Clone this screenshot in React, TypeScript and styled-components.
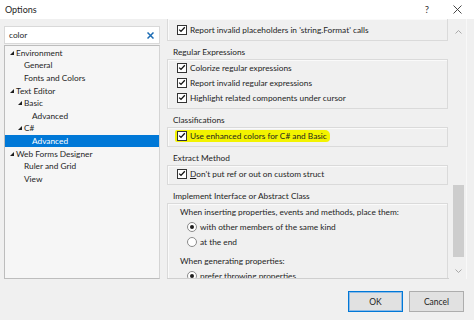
import { createGlobalStyle } from 'styled-components';
import styled from 'styled-components';

type TreeItem = { label: string; level: number; expandable?: boolean; selected?: boolean };

const treeItems: TreeItem[] = [
  { label: 'Environment', level: 0, expandable: true },
  { label: 'General', level: 1 },
  { label: 'Fonts and Colors', level: 1 },
  { label: 'Text Editor', level: 0, expandable: true },
  { label: 'Basic', level: 1, expandable: true },
  { label: 'Advanced', level: 2 },
  { label: 'C#', level: 1, expandable: true },
  { label: 'Advanced', level: 2, selected: true },
  { label: 'Web Forms Designer', level: 0, expandable: true },
  { label: 'Ruler and Grid', level: 1 },
  { label: 'View', level: 1 },
];

const FONT = "'Lato', 'Open Sans', sans-serif";
const TEXT_SIZE = '8.3px';

function CheckBox({ marked }: { marked?: boolean }) {
  return (
    <StyledCheck $marked={marked}>
      <svg width="8" height="7" viewBox="0 0 8 7">
        <path d="M1.2 3.6 L3 5.4 L6.8 1.2" fill="none" stroke="#111" strokeWidth="1.3" />
      </svg>
    </StyledCheck>
  );
}

function Radio({ on }: { on?: boolean }) {
  return <StyledRadio $on={on} />;
}

function App() {
  return (
    <>
      <GlobalStyle />
      <StyledWindow>
        <StyledTitleBar>
          <StyledTitle>Options</StyledTitle>
          <StyledCaptionButton>?</StyledCaptionButton>
          <StyledCaptionButton>
            <svg width="9" height="9" viewBox="0 0 9 9">
              <path d="M0.5 0.5 L8.5 8.5 M8.5 0.5 L0.5 8.5" stroke="#333" strokeWidth="0.9" />
            </svg>
          </StyledCaptionButton>
        </StyledTitleBar>

        <StyledBody>
          <StyledLeft>
            <StyledSearch>
              <span>color</span>
              <StyledClear>
                <svg width="7" height="7" viewBox="0 0 7 7">
                  <path d="M0.5 0.5 L6.5 6.5 M6.5 0.5 L0.5 6.5" stroke="#1c6cb4" strokeWidth="1.5" />
                </svg>
              </StyledClear>
            </StyledSearch>
            <StyledTree>
              {treeItems.map((item, index) => (
                <StyledTreeRow key={index} $level={item.level} $selected={item.selected}>
                  <StyledArrow>
                    {item.expandable && (
                      <svg width="4" height="4" viewBox="0 0 4 4">
                        <polygon points="4,0 4,4 0,4" fill={item.selected ? '#fff' : '#1e1e1e'} />
                      </svg>
                    )}
                  </StyledArrow>
                  {item.label}
                </StyledTreeRow>
              ))}
            </StyledTree>
          </StyledLeft>

          <StyledRight>
            <StyledViewport>
              <StyledGroup $cut>
                <StyledRow>
                  <CheckBox marked />
                  Report invalid placeholders in 'string.Format' calls
                </StyledRow>
              </StyledGroup>

              <StyledHeader>Regular Expressions</StyledHeader>
              <StyledGroup>
                <StyledRow>
                  <CheckBox marked />
                  Colorize regular expressions
                </StyledRow>
                <StyledRow>
                  <CheckBox marked />
                  Report invalid regular expressions
                </StyledRow>
                <StyledRow>
                  <CheckBox marked />
                  Highlight related components under cursor
                </StyledRow>
              </StyledGroup>

              <StyledHeader>Classifications</StyledHeader>
              <StyledGroup>
                <StyledRow>
                  <StyledMarker>
                    <CheckBox marked />
                    Use enhanced colors for C# and Basic
                  </StyledMarker>
                </StyledRow>
              </StyledGroup>

              <StyledHeader>Extract Method</StyledHeader>
              <StyledGroup>
                <StyledRow>
                  <CheckBox marked />
                  <span>
                    <u>D</u>on't put ref or out on custom struct
                  </span>
                </StyledRow>
              </StyledGroup>

              <StyledHeader>Implement Interface or Abstract Class</StyledHeader>
              <StyledGroup>
                <StyledLabel>When inserting properties, events and methods, place them:</StyledLabel>
                <StyledRow $indent>
                  <Radio on />
                  with other members of the same kind
                </StyledRow>
                <StyledRow $indent>
                  <Radio />
                  at the end
                </StyledRow>
                <StyledLabel $gap>When generating properties:</StyledLabel>
                <StyledRow $indent>
                  <Radio on />
                  prefer throwing properties
                </StyledRow>
              </StyledGroup>
            </StyledViewport>

            <StyledScrollbar>
              <StyledScrollArrow>
                <svg width="7" height="4" viewBox="0 0 7 4">
                  <path d="M0.5 3.5 L3.5 0.5 L6.5 3.5" fill="none" stroke="#a0a0a0" strokeWidth="0.9" />
                </svg>
              </StyledScrollArrow>
              <StyledTrack>
                <StyledThumb />
              </StyledTrack>
              <StyledScrollArrow>
                <svg width="7" height="4" viewBox="0 0 7 4">
                  <path d="M0.5 0.5 L3.5 3.5 L6.5 0.5" fill="none" stroke="#a0a0a0" strokeWidth="0.9" />
                </svg>
              </StyledScrollArrow>
            </StyledScrollbar>
          </StyledRight>
        </StyledBody>

        <StyledFooter>
          <StyledButton $primary>OK</StyledButton>
          <StyledButton>Cancel</StyledButton>
        </StyledFooter>
      </StyledWindow>
    </>
  );
}

export default App;

const GlobalStyle = createGlobalStyle`
  html, body {
    margin: 0;
    padding: 0;
    background: #f0f0f0;
  }
  body {
    font-family: ${FONT};
    font-size: ${TEXT_SIZE};
    color: #1e1e1e;
  }
`;

const StyledWindow = styled.div`
  width: 474px;
  height: 320px;
  display: flex;
  flex-direction: column;
  background: #f0f0f0;
  overflow: hidden;
`;

const StyledTitleBar = styled.div`
  height: 19px;
  flex: none;
  display: flex;
  align-items: center;
  background: #ffffff;
  padding-left: 5px;
  padding-right: 2px;
`;

const StyledTitle = styled.span`
  flex: 1;
  font-size: 9px;
  color: #1e1e1e;
`;

const StyledCaptionButton = styled.span`
  width: 30px;
  display: flex;
  justify-content: center;
  align-items: center;
  font-size: 9.5px;
  color: #333;
`;

const StyledBody = styled.div`
  height: 260px;
  flex: none;
  display: flex;
  padding-left: 4px;
`;

const StyledLeft = styled.div`
  width: 156px;
  display: flex;
  flex-direction: column;
  padding-top: 7px;
  gap: 1px;
`;

const StyledSearch = styled.div`
  height: 18px;
  flex: none;
  box-sizing: border-box;
  display: flex;
  align-items: center;
  justify-content: space-between;
  padding: 0 5px 0 4px;
  background: #ffffff;
  border: 1px solid #d9d9d9;
  font-size: ${TEXT_SIZE};
`;

const StyledClear = styled.span`
  display: flex;
  align-items: center;
`;

const StyledTree = styled.div`
  flex: 1;
  box-sizing: border-box;
  background: #f6f6f6;
  border: 1px solid #bdbdbd;
  border-right-color: #d4d4d4;
  padding-top: 0.5px;
`;

const StyledTreeRow = styled.div<{ $level: number; $selected?: boolean }>`
  height: 12.6px;
  display: flex;
  align-items: center;
  padding-left: ${(p) => p.$level * 8}px;
  background: ${(p) => (p.$selected ? '#0078d7' : 'transparent')};
  color: ${(p) => (p.$selected ? '#ffffff' : '#1e1e1e')};
  font-size: ${TEXT_SIZE};
  white-space: nowrap;
`;

const StyledArrow = styled.span`
  width: 11px;
  flex: none;
  display: flex;
  align-items: center;
  padding-left: 5px;
  box-sizing: border-box;
`;

const StyledRight = styled.div`
  width: 300px;
  margin-left: 7px;
  display: flex;
`;

const StyledViewport = styled.div`
  width: 282px;
  overflow: hidden;
  border-bottom: 1px solid #cfcfcf;
  box-sizing: border-box;
  padding-right: 1px;
`;

const StyledGroup = styled.div<{ $cut?: boolean }>`
  border: 1px solid #dadada;
  border-top-width: ${(p) => (p.$cut ? 0 : 1)}px;
  box-shadow: inset 1px 1px 0 #fafafa;
  padding: ${(p) => (p.$cut ? 3 : 0)}px 0 3px 9px;
`;

const StyledHeader = styled.div`
  height: 14px;
  margin-top: 4px;
  display: flex;
  align-items: center;
  padding-left: 6px;
  font-size: ${TEXT_SIZE};
`;

const StyledRow = styled.div<{ $indent?: boolean }>`
  height: 15px;
  display: flex;
  align-items: center;
  gap: 3px;
  padding-left: ${(p) => (p.$indent ? 10 : 0)}px;
  font-size: ${TEXT_SIZE};
  white-space: nowrap;
`;

const StyledLabel = styled.div<{ $gap?: boolean }>`
  height: 15px;
  display: flex;
  align-items: center;
  margin-top: ${(p) => (p.$gap ? 4 : 0)}px;
  padding-left: 3px;
  font-size: ${TEXT_SIZE};
  white-space: nowrap;
`;

const StyledMarker = styled.span`
  display: flex;
  align-items: center;
  gap: 3px;
  margin-left: -2px;
  padding: 1px 3px 1px 2px;
  background: #f3f300;
  border-radius: 2px 5px 4px 2px;
`;

const StyledCheck = styled.span<{ $marked?: boolean }>`
  width: 10px;
  height: 10px;
  box-sizing: border-box;
  flex: none;
  display: flex;
  align-items: center;
  justify-content: center;
  border: 1px solid #333;
  background: #ffffff;
  svg {
    visibility: ${(p) => (p.$marked ? 'visible' : 'hidden')};
  }
`;

const StyledRadio = styled.span<{ $on?: boolean }>`
  width: 10px;
  height: 10px;
  box-sizing: border-box;
  flex: none;
  border-radius: 50%;
  border: 1px solid #8a8a8a;
  background: #ffffff;
  display: flex;
  align-items: center;
  justify-content: center;
  &::after {
    content: '';
    width: 4px;
    height: 4px;
    border-radius: 50%;
    background: ${(p) => (p.$on ? '#1e1e1e' : 'transparent')};
  }
`;

const StyledScrollbar = styled.div`
  width: 17px;
  margin-left: 1px;
  display: flex;
  flex-direction: column;
  padding-top: 4px;
  box-sizing: border-box;
  background: #f0f0f0;
  border-right: 1px solid #f8f8f8;
`;

const StyledScrollArrow = styled.div`
  height: 17px;
  display: flex;
  align-items: center;
  justify-content: center;
`;

const StyledTrack = styled.div`
  flex: 1;
  display: flex;
  flex-direction: column;
  justify-content: flex-end;
  padding: 0 2px 5px 3px;
`;

const StyledThumb = styled.div`
  height: 72px;
  background: #cdcdcd;
`;

const StyledFooter = styled.div`
  flex: 1;
  display: flex;
  justify-content: flex-end;
  align-items: flex-start;
  gap: 6px;
  padding: 12px 10px 0 0;
`;

const StyledButton = styled.button<{ $primary?: boolean }>`
  width: 55px;
  height: 21px;
  padding: 0;
  background: #e1e1e1;
  border: 1px solid ${(p) => (p.$primary ? '#0078d7' : '#adadad')};
  box-shadow: ${(p) => (p.$primary ? 'inset 0 0 0 1px #8ebbe6' : 'none')};
  font-family: ${FONT};
  font-size: 8.5px;
  color: #1e1e1e;
`;
